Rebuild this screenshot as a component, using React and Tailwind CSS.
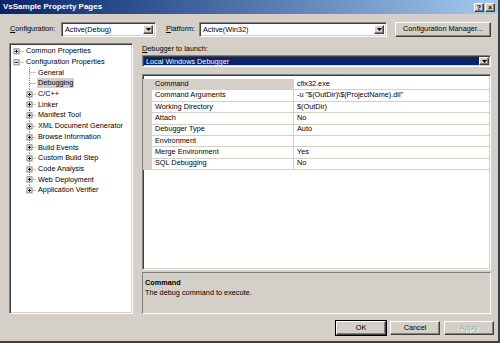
import React from "react";

const sunken =
  "border border-t-[#808080] border-l-[#808080] border-b-white border-r-white shadow-[inset_1px_1px_0_#404040,inset_-1px_-1px_0_#d4d0c8]";
const raised =
  "border border-t-white border-l-white border-b-[#404040] border-r-[#404040] shadow-[inset_-1px_-1px_0_#808080]";

const tree = [
  { label: "Common Properties", level: 0, box: "plus" },
  { label: "Configuration Properties", level: 0, box: "minus" },
  { label: "General", level: 1 },
  { label: "Debugging", level: 1, selected: true },
  { label: "C/C++", level: 1, box: "plus" },
  { label: "Linker", level: 1, box: "plus" },
  { label: "Manifest Tool", level: 1, box: "plus" },
  { label: "XML Document Generator", level: 1, box: "plus" },
  { label: "Browse Information", level: 1, box: "plus" },
  { label: "Build Events", level: 1, box: "plus" },
  { label: "Custom Build Step", level: 1, box: "plus" },
  { label: "Code Analysis", level: 1, box: "plus" },
  { label: "Web Deployment", level: 1, box: "plus" },
  { label: "Application Verifier", level: 1, box: "plus", last: true },
];

const props = [
  ["Command", "cfix32.exe"],
  ["Command Arguments", '-u "$(OutDir)\\$(ProjectName).dll"'],
  ["Working Directory", "$(OutDir)"],
  ["Attach", "No"],
  ["Debugger Type", "Auto"],
  ["Environment", ""],
  ["Merge Environment", "Yes"],
  ["SQL Debugging", "No"],
];

function Box({ cx, kind }) {
  return (
    <g>
      <rect x={cx - 2.5} y={2.85} width="5" height="5" fill="white" stroke="#808080" strokeWidth="1" />
      <line x1={cx - 1.5} y1={5.35} x2={cx + 1.5} y2={5.35} stroke="black" strokeWidth="1" />
      {kind === "plus" && <line x1={cx} y1={3.85} x2={cx} y2={6.85} stroke="black" strokeWidth="1" />}
    </g>
  );
}

function TreeRow({ item }) {
  const lvl0 = item.level === 0;
  const w = lvl0 ? 15 : 27;
  const cx = lvl0 ? 6.5 : 19.5;
  return (
    <div className="flex h-[10.7px] items-center">
      <svg width={w} height="10.7" className="shrink-0">
        {!lvl0 && (
          <line
            x1={cx}
            y1="0"
            x2={cx}
            y2={item.last ? 5.35 : 10.7}
            stroke="#808080"
            strokeDasharray="1 1"
          />
        )}
        <line x1={cx} y1="5.35" x2={w - 1} y2="5.35" stroke="#808080" strokeDasharray="1 1" />
        {item.box && <Box cx={cx} kind={item.box} />}
      </svg>
      <span
        className={`leading-[10px] px-[1px] ${item.selected ? "bg-[#d4d0c8]" : ""}`}
      >
        {item.label}
      </span>
    </div>
  );
}

function Arrow() {
  return (
    <div className={`w-[10px] h-full bg-[#d4d0c8] flex items-center justify-center shrink-0 ${raised}`}>
      <svg width="5" height="3">
        <polygon points="0,0 5,0 2.5,3" fill="black" />
      </svg>
    </div>
  );
}

function Combo({ value, className }) {
  return (
    <div className={`h-[15px] bg-white flex items-stretch p-[2px] ${sunken} ${className}`}>
      <span className="flex-1 pl-[1px] leading-[10px] self-center">{value}</span>
      <Arrow />
    </div>
  );
}

function Btn({ children, def, disabled }) {
  return (
    <div
      className={`w-[50px] h-[14px] flex items-center justify-center bg-[#d4d0c8] ${
        def ? "outline outline-1 outline-black" : ""
      } ${raised} ${disabled ? "text-[#a0a0a0] [text-shadow:1px_1px_0_white]" : ""}`}
    >
      {children}
    </div>
  );
}

export default function App() {
  return (
    <div className="w-[500px] h-[343px] bg-[#d4d0c8] flex flex-col text-[7.3px] text-black font-['Liberation_Sans',Arial,sans-serif] border-r-2 border-b-2 border-r-[#404040] border-b-[#404040] overflow-hidden">
      {/* title bar */}
      <div className="h-[14px] shrink-0 bg-gradient-to-r from-[#0a246a] to-[#a6caf0] flex items-center justify-between pl-[3px] pr-[3px]">
        <span className="text-white font-bold text-[8px] leading-none">VsSample Property Pages</span>
        <div className="flex gap-[1px]">
          <div className={`w-[10px] h-[9px] bg-[#d4d0c8] flex items-center justify-center font-bold text-[7px] leading-none ${raised}`}>?</div>
          <div className={`w-[10px] h-[9px] bg-[#d4d0c8] flex items-center justify-center font-bold text-[7px] leading-none ${raised}`}>×</div>
        </div>
      </div>

      {/* configuration row */}
      <div className="mt-[8px] h-[15px] flex items-center pl-[10px]">
        <span className="w-[51px]">
          <u>C</u>onfiguration:
        </span>
        <Combo value="Active(Debug)" className="w-[95px]" />
        <span className="ml-[10px] w-[33px]">
          <u>P</u>latform:
        </span>
        <Combo value="Active(Win32)" className="w-[188px]" />
        <div className={`ml-[8px] w-[96px] h-[15px] flex items-center justify-center bg-[#d4d0c8] ${raised}`}>
          Configuration Manager...
        </div>
      </div>

      {/* main */}
      <div className="mt-[6px] flex h-[271px]">
        <div className={`ml-[9px] w-[124px] h-full bg-white pt-[2px] ${sunken}`}>
          {tree.map((t) => (
            <TreeRow key={t.label} item={t} />
          ))}
        </div>

        <div className="ml-[9px] w-[349px] flex flex-col">
          <div className="h-[12px] leading-[10px] pt-[1px]">
            <u>D</u>ebugger to launch:
          </div>
          <div className={`h-[12px] flex items-stretch p-[1px] bg-white ${sunken}`}>
            <span className="flex-1 bg-[#0a246a] text-white pl-[2px] leading-[9px] flex items-center">
              Local Windows Debugger
            </span>
            <Arrow />
          </div>

          <div className={`mt-[7px] h-[196px] bg-white pt-[4px] ${sunken}`}>
            {props.map(([k, v], i) => (
              <div key={k} className="flex h-[11.4px]">
                <div className="w-[9px] bg-[#d4d0c8] shrink-0" />
                <div
                  className={`w-[142px] shrink-0 pl-[3px] flex items-center border-b border-r border-[#d4d0c8] ${
                    i === 0 ? "bg-[#d4d0c8]" : ""
                  }`}
                >
                  {k}
                </div>
                <div className="flex-1 pl-[3px] flex items-center border-b border-[#d4d0c8]">{v}</div>
              </div>
            ))}
          </div>

          <div className="mt-[2px] h-[42px] border border-t-[#808080] border-l-[#808080] border-b-white border-r-white px-[2px] pt-[5px] leading-[10px]">
            <div className="font-bold">Command</div>
            <div>The debug command to execute.</div>
          </div>
        </div>
      </div>

      {/* buttons */}
      <div className="mt-[7px] flex justify-end gap-[4px] pr-[4px]">
        <Btn def>OK</Btn>
        <Btn>Cancel</Btn>
        <Btn disabled>Apply</Btn>
      </div>
    </div>
  );
}
